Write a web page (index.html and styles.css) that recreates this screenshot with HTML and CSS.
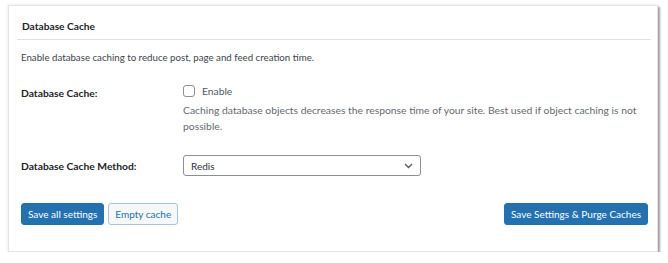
FILE: index.html
```html
<!DOCTYPE html>
<html lang="en">

<head>
    <meta charset="UTF-8" />
    <meta name="viewport" content="width=device-width, initial-scale=1.0" />
    <title>Database Cache</title>
    <link rel="stylesheet" href="styles.css">
</head>

<body>
    <div class="postbox">
        <div class="postbox-header">
            <h3>Database Cache</h3>
        </div>

        <div class="inside">
            <p class="intro">Enable database caching to reduce post, page and feed creation time.</p>

            <div class="form-row row-enable">
                <div class="row-label">Database Cache:</div>
                <div class="row-field">
                    <label class="check">
                        <span class="checkbox"></span>
                        <span>Enable</span>
                    </label>
                    <p class="help">Caching database objects decreases the response time of your site. Best used if object caching is not possible.</p>
                </div>
            </div>

            <div class="form-row row-method">
                <div class="row-label">Database Cache Method:</div>
                <div class="row-field">
                    <div class="select">
                        <span>Redis</span>
                        <svg width="9" height="6" viewBox="0 0 9 6">
                            <path d="M1 1 L4.5 4.5 L8 1" fill="none" stroke="#50575e" stroke-width="1.3" />
                        </svg>
                    </div>
                </div>
            </div>

            <div class="actions">
                <div class="actions-left">
                    <button class="button primary">Save all settings</button>
                    <button class="button secondary">Empty cache</button>
                </div>
                <button class="button primary">Save Settings &amp; Purge Caches</button>
            </div>
        </div>
    </div>
</body>

</html>
```

FILE: styles.css
```css
html,
body {
    margin: 0;
    background: #fff;
    font-family: 'Lato', sans-serif;
    font-size: 10px;
    color: #1d2327;
}

.postbox {
    box-sizing: border-box;
    width: 650px;
    height: 247px;
    margin: 5px 0 0 8px;
    border: 1px solid #e2e4e7;
    background: #fff;
    box-shadow: 0 0 3px rgba(0, 0, 0, 0.12), 2px 2px 2px rgba(0, 0, 0, 0.35);
}

.postbox-header {
    margin: 0 6px 0 8px;
    padding: 12px 0 4px 5px;
    border-bottom: 1px solid #e0e0e0;
}

.postbox-header h3 {
    margin: 0;
    font-size: 10.2px;
    line-height: 17px;
    font-weight: 700;
}

.inside {
    padding: 9px 9px 0 12px;
}

.intro {
    margin: 0;
    font-size: 9.7px;
    line-height: 16px;
    color: #3c434a;
}

.form-row {
    display: flex;
}

.row-label {
    width: 162px;
    flex-shrink: 0;
    font-size: 10.3px;
    font-weight: 700;
    line-height: 16px;
}

.row-enable {
    margin-top: 18px;
}

.row-enable .row-label {
    padding-top: 2px;
}

.check {
    display: flex;
    align-items: center;
    gap: 7px;
    line-height: 16px;
    font-size: 10.3px;
    color: #50575e;
}

.checkbox {
    box-sizing: border-box;
    width: 12px;
    height: 12px;
    border: 1px solid #8c8f94;
    border-radius: 3px;
}

.help {
    margin: 3px 0 0;
    font-size: 10.35px;
    line-height: 16px;
    color: #646970;
}

.row-method {
    margin-top: 21px;
    align-items: center;
}

.select {
    box-sizing: border-box;
    width: 238px;
    height: 21px;
    padding: 0 7px;
    border: 1px solid #8c8f94;
    border-radius: 3px;
    display: flex;
    align-items: center;
    justify-content: space-between;
    color: #2c3338;
}

.actions {
    margin-top: 27px;
    display: flex;
    justify-content: space-between;
}

.actions-left {
    display: flex;
    gap: 4px;
}

.button {
    box-sizing: border-box;
    height: 22px;
    padding: 0 6px;
    border-radius: 3px;
    font-family: inherit;
    font-size: 10px;
    cursor: pointer;
}

.primary {
    background: #2271b1;
    border: 1px solid #2271b1;
    color: #fff;
}

.secondary {
    background: #f6f7f7;
    border: 1px solid #a7c4dd;
    color: #2271b1;
}
```
